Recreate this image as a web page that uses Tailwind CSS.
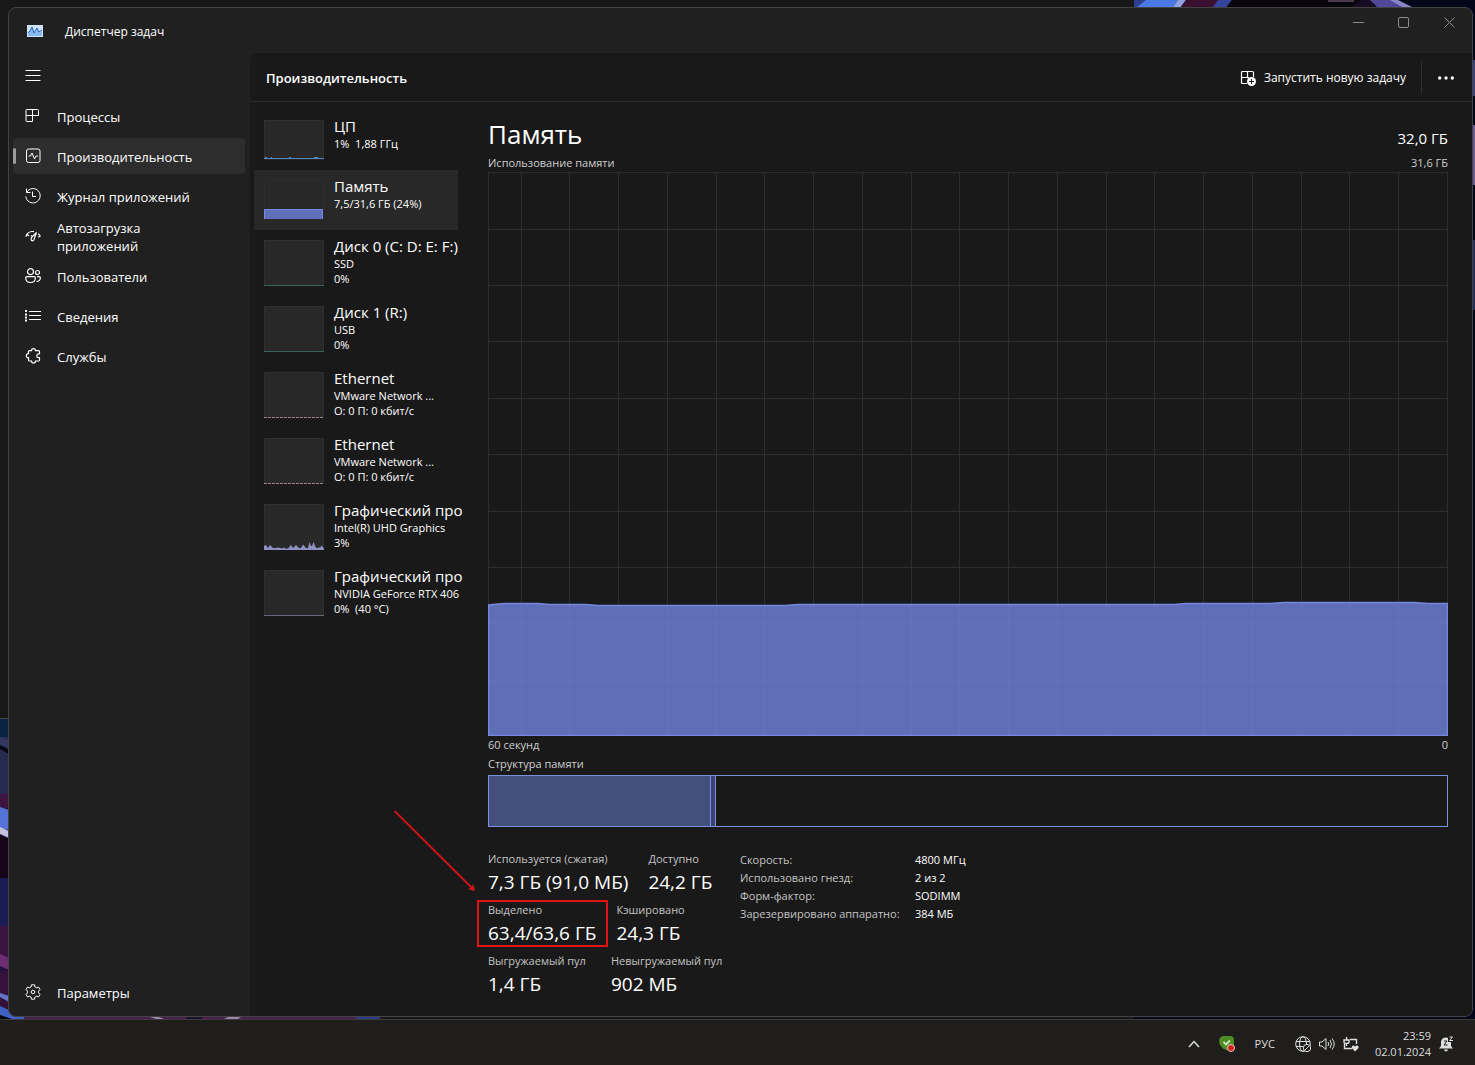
<!DOCTYPE html>
<html lang="ru">
<head>
<meta charset="utf-8">
<meta name="viewport" content="width=device-width, initial-scale=1">
<title>Диспетчер задач</title>
<script src="https://cdn.jsdelivr.net/npm/@tailwindcss/browser@4"></script>
</head>
<body class="bg-[#181818] font-['Open_Sans','Noto_Sans',sans-serif] text-white">
<div class="flex min-h-screen flex-col">

  <!-- Desktop with the application window -->
  <div class="relative flex flex-1 flex-col overflow-hidden pt-[7px] pr-[2px] pb-[2px] pl-2">
    <!-- Wallpaper strips visible around the window -->
    <svg class="absolute top-0 right-0 h-full w-[341px]" viewBox="0 0 341 1019" preserveAspectRatio="none" aria-hidden="true">
      <rect width="341" height="1019" fill="#03071a"/>
      <rect width="240" height="8" fill="#180b24"/>
      <path d="M0 8V0H44L38 8Z" fill="#4a79e6"/><path d="M0 8V0H12L2 8Z" fill="#2c3f8c"/><path d="M44 0H52L46 8H38Z" fill="#8fa2e0"/>
      <path d="M52 0H90L80 8H46Z" fill="#3a1030"/><path d="M78 8 84 0H98L92 8Z" fill="#35439b"/>
      <path d="M98 0H228L215 8H92Z" fill="#08060c"/><path d="M194 0H220V2H194Z" fill="#4b3b4a"/>
      <path d="M236 0H262L276 8H244Z" fill="#51489a"/><path d="M256 0H264L280 8H270Z" fill="#8a85c4"/>
      <rect x="339" y="60" width="2" height="36" fill="#35427e"/><rect x="339" y="125" width="2" height="60" fill="#665a94"/>
      <rect x="339" y="240" width="2" height="70" fill="#22305c"/>
    </svg>
    <svg class="absolute bottom-0 left-0 h-[301px] w-[380px]" viewBox="0 0 380 301" aria-hidden="true">
      <rect width="380" height="301" fill="#25103a"/>
      <rect width="380" height="1" fill="#444"/><rect y="1" width="20" height="88" fill="#252a4e"/>
      <rect y="1" width="20" height="18" fill="#0a2340"/><path d="M0 19 9 22V30L0 27Z" fill="#31375f"/>
      <path d="M0 27 9 32V36L0 31Z" fill="#05060f"/><rect y="76" width="20" height="14" fill="#3d1440"/>
      <path d="M0 89 9 92V112L0 110Z" fill="#5572d6"/><path d="M0 109 9 113V120L0 116Z" fill="#c5c2e0"/>
      <path d="M0 117 9 121V160H0Z" fill="#140616"/><rect y="160" width="20" height="48" fill="#1c1c55"/>
      <rect y="208" width="20" height="32" fill="#3b1242"/><path d="M0 236 9 240V252L0 248Z" fill="#6b2e72"/>
      <rect y="253" width="20" height="48" fill="#35123c"/><path d="M0 275 9 278V284L0 279Z" fill="#6575cc"/>
      <path d="M0 288 28 301H8L0 297Z" fill="#3f61c4"/><path d="M0 297 12 301H0Z" fill="#06060e"/>
      <rect x="24" y="296" width="356" height="5" fill="#4a1f50"/>
      <path d="M144 297H154L164 301H156Z" fill="#9a86aa"/><path d="M224 301 232 297H244L238 301Z" fill="#9a86aa"/>
      <rect x="186" y="297" width="16" height="4" fill="#20122c"/><rect x="356" y="297" width="24" height="4" fill="#2a3c86"/>
    </svg>

    <div class="relative flex flex-1 flex-col overflow-hidden rounded-lg border border-[#434343] bg-[#202020]">
      <header class="flex h-[45px] shrink-0 items-center justify-between">
        <div class="flex items-center gap-[22px] pl-[18px]">
          <svg class="h-3 w-4" viewBox="0 0 16 12" aria-hidden="true"><rect width="16" height="12" fill="#cfe3f6"/><path d="M1 11V7L3 6 5 2 7 7 8 8 10 4 12 7 13 6 15 7V11Z" fill="#8ab9ee"/><path d="M1 8 3 6 5 2 7 8 10 3 12 7 15 5" fill="none" stroke="#2166bd"/></svg>
          <h1 class="pt-[3px] text-xs leading-4">Диспетчер задач</h1>
        </div>
        <div class="flex self-start text-[#8b8b8b]">
          <button class="flex h-7 w-[46px] items-center justify-center" aria-label="Свернуть"><svg class="size-[11px]" viewBox="0 0 11 11" fill="none" stroke="currentColor"><path d="M0 5.5H11"/></svg></button>
          <button class="flex h-7 w-[45px] items-center justify-center" aria-label="Развернуть"><svg class="size-[11px]" viewBox="0 0 11 11" fill="none" stroke="currentColor"><rect x=".5" y=".5" width="10" height="10" rx="1.5"/></svg></button>
          <button class="flex h-7 w-[46px] items-center justify-center" aria-label="Закрыть"><svg class="size-[11px]" viewBox="0 0 11 11" fill="none" stroke="currentColor"><path d="M.5 .5 10.500 10.500M10.500 .5 .5 10.500"/></svg></button>
        </div>
      </header>

      <div class="flex flex-1">
        <nav class="flex w-[241px] shrink-0 flex-col gap-1 pt-[5px] pr-[5px] pb-1.5 pl-1 text-[13px] leading-[18px]">
          <button class="flex h-9 w-10 items-center pl-3" aria-label="Открыть навигацию"><svg class="size-4" viewBox="0 0 16 16" fill="none" stroke="currentColor"><path d="M.5 2.500H15.500M.5 7.500H15.500M.5 12.500H15.500"/></svg></button>
          <button class="flex h-9 items-center gap-4 rounded pl-3 text-left">
            <svg class="size-4 shrink-0" viewBox="0 0 16 16" fill="none" stroke="currentColor"><path d="M2 1.500H12.500Q13.500 1.500 13.500 2.500V7.500H1V2.500Q1 1.500 2 1.500ZM1 7.500V12.500Q1 13.500 2 13.500H7.500V1.500"/></svg>
            <span class="pt-0.5">Процессы</span></button>
          <button class="relative flex h-9 items-center gap-4 rounded bg-[#2d2d2d] pl-3 text-left" aria-current="page">
            <span class="absolute top-2.5 left-0 h-4 w-[3px] rounded-full bg-[#9c9c9c]"></span>
            <svg class="size-4 shrink-0" viewBox="0 0 16 16" fill="none" stroke="currentColor"><rect x="1.500" y="1" width="13.500" height="13.500" rx="2"/><path d="M3.500 8H5.500L7 5 9.500 11 11 8H13"/></svg>
            <span class="pt-0.5">Производительность</span></button>
          <button class="flex h-9 items-center gap-4 rounded pl-3 text-left">
            <svg class="size-4 shrink-0" viewBox="0 0 16 16" fill="none" stroke="currentColor"><path d="M1.500 .5V4.500H5.500M1.700 4.200A7.200 7.200 0 1 1 .8 8.500M7.500 3.500V8.500H11"/></svg>
            <span class="pt-0.5">Журнал приложений</span></button>
          <button class="flex h-9 items-center gap-4 rounded pl-3 text-left">
            <svg class="size-4 shrink-0" viewBox="0 0 16 16" fill="none" stroke="currentColor" stroke-width="1.200"><path d="M.7 8.500A7.500 7.500 0 0 1 9 3.600M13.200 5.800A7.500 7.500 0 0 1 15.400 8.500M.7 8.500 2.500 6.500 4 8M15.400 8.500 13 9M11.500 4.500 6.500 9.500Q5.300 12.500 7.500 12.800 9.200 12.500 9.300 10.500L11.500 4.500ZM8 8.500 6 7.500"/></svg>
            <span class="pt-0.5">Автозагрузка<br>приложений</span></button>
          <button class="flex h-9 items-center gap-4 rounded pl-3 text-left">
            <svg class="size-4 shrink-0" viewBox="0 0 16 16" fill="none" stroke="currentColor" stroke-width="1.200"><circle cx="5.500" cy="3.700" r="3"/><circle cx="12.500" cy="4.500" r="2"/><path d="M2 8.600H9Q10.400 8.600 10.400 10 10.200 14.500 5.500 14.500T.7 10Q.7 8.600 2 8.600ZM12 8.600H14.200Q15.400 8.600 15.400 10 15 13.500 11.500 13.500"/></svg>
            <span class="pt-0.5">Пользователи</span></button>
          <button class="flex h-9 items-center gap-4 rounded pl-3 text-left">
            <svg class="size-4 shrink-0" viewBox="0 0 16 16" fill="none" stroke="currentColor"><path d="M4 3.500H16M4 7.500H16M4 11.500H16"/><path stroke-width="2" d="M0 3H2M0 6.500H2M0 9.500H2M0 12.500H2"/></svg>
            <span class="pt-0.5">Сведения</span></button>
          <button class="flex h-9 items-center gap-4 rounded pl-3 text-left">
            <svg class="size-4 shrink-0" viewBox="0 0 16 16" fill="none" stroke="currentColor" stroke-width="1.200"><path d="M4.500 2.600H6.500Q6.500 .6 8.500 .6T10.500 2.600H13.500Q14.500 2.600 14.500 3.600V5.800H13.500Q11.800 5.800 11.800 7.700T13.500 9.600H14.500V12Q14.500 13 13.500 13H10.500Q10.500 15 8.500 15T6.500 13H4.500Q3.500 13 3.500 12V9.700Q1.300 9.700 1.300 7.700T3.500 5.700V3.600Q3.500 2.600 4.500 2.600Z"/></svg>
            <span class="pt-0.5">Службы</span></button>
          <button class="mt-auto flex h-9 items-center gap-4 rounded pl-3 text-left">
            <svg class="size-4 shrink-0" viewBox="0 0 16 16" fill="none" stroke="currentColor"><path d="M6.500 .8H9.500L10 3 11.400 3.800 13.600 3.100 15 5.600 13.500 7.200V8.800L15 10.400 13.600 12.900 11.400 12.200 10 13 9.500 15.200H6.500L6 13 4.600 12.200 2.400 12.900 1 10.400 2.500 8.800V7.200L1 5.600 2.400 3.100 4.600 3.800 6 3Z" stroke-linejoin="round"/><circle cx="8" cy="8" r="1.800"/></svg>
            <span class="pt-0.5">Параметры</span></button>
        </nav>

        <main class="flex min-w-0 flex-1 flex-col rounded-tl-lg bg-[#191919]">
          <div class="flex h-[49px] shrink-0 items-center justify-between border-b border-[#2b2b2b] pt-0.5 pr-[13px] pl-4">
            <h2 class="text-[13px] leading-[18px] font-semibold">Производительность</h2>
            <div class="flex items-center">
              <button class="flex h-8 items-center gap-2 pr-[15px] text-xs">
                <svg class="size-4" viewBox="0 0 16 16" fill="none" stroke="currentColor"><path d="M7 13.500H2.500Q1.500 13.500 1.500 12.500V2.500Q1.500 1.500 2.500 1.500H12.500Q13.500 1.500 13.500 2.500V7M7.500 1.500V8M1.500 7.500H9" stroke-width="1.200"/><circle cx="11.500" cy="11.500" r="4.500" fill="currentColor" stroke="none"/><path d="M9 11.500H14M11.500 9V14" stroke="#191919"/></svg>
                Запустить новую задачу</button>
              <button class="flex h-8 items-center border-l border-[#2f2f2f] pr-[5px] pl-4" aria-label="Дополнительно"><svg class="size-4" viewBox="0 0 16 16" fill="currentColor"><circle cx="1.700" cy="8" r="1.700"/><circle cx="8" cy="8" r="1.700"/><circle cx="14.300" cy="8" r="1.700"/></svg></button>
            </div>
          </div>

          <div class="flex flex-1">
            <div class="flex w-[214px] shrink-0 flex-col pt-2 pl-1 text-[11px] leading-[15px]">
              <button class="flex h-[60px] w-[204px] gap-2.5 pt-2.5 pl-2.5 text-left whitespace-nowrap">
                <svg class="h-10 w-[60px] shrink-0 bg-[#282828]" viewBox="0 0 60 40"><path d="M.5 39V.5H59.500V39" fill="none" stroke="#303030"/><path d="M0 38.500H60M1 37.500H3M7 37.500H8M25 37.500H27M50 37.500H54" stroke="#5288bd"/></svg>
                <span><span class="-mt-0.5 mb-0.5 block text-[15px] leading-4">ЦП</span>1%&nbsp; 1,88 ГГц</span></button>
              <button class="flex h-[60px] w-[204px] gap-2.5 bg-[#282828] pt-2.5 pl-2.5 text-left whitespace-nowrap" aria-pressed="true">
                <svg class="h-10 w-[60px] shrink-0" viewBox="0 0 60 40"><path d="M.5 30V.5H59.500V30" fill="none" stroke="#2d2d2d"/><path d="M0 29H59V39H0Z" fill="#606fb9"/><path d="M.5 39V29.500H58.500V39" fill="none" stroke="#7587de"/></svg>
                <span><span class="-mt-0.5 mb-0.5 block text-[15px] leading-4">Память</span>7,5/31,6 ГБ (24%)</span></button>
              <button class="flex h-[66px] w-[204px] gap-2.5 pt-2.5 pl-2.5 text-left whitespace-nowrap">
                <svg class="h-[46px] w-[60px] shrink-0 bg-[#282828]" viewBox="0 0 60 46"><path d="M.5 45V.5H59.500V45" fill="none" stroke="#303030"/><path d="M0 45.500H60" stroke="#3c5f60"/></svg>
                <span><span class="-mt-0.5 mb-0.5 block text-[15px] leading-4">Диск 0 (C: D: E: F:)</span>SSD<br>0%</span></button>
              <button class="flex h-[66px] w-[204px] gap-2.5 pt-2.5 pl-2.5 text-left whitespace-nowrap">
                <svg class="h-[46px] w-[60px] shrink-0 bg-[#282828]" viewBox="0 0 60 46"><path d="M.5 45V.5H59.500V45" fill="none" stroke="#303030"/><path d="M0 45.500H60" stroke="#3c5f60"/></svg>
                <span><span class="-mt-0.5 mb-0.5 block text-[15px] leading-4">Диск 1 (R:)</span>USB<br>0%</span></button>
              <button class="flex h-[66px] w-[204px] gap-2.5 pt-2.5 pl-2.5 text-left whitespace-nowrap">
                <svg class="h-[46px] w-[60px] shrink-0 bg-[#282828]" viewBox="0 0 60 46"><path d="M.5 45V.5H59.500V45" fill="none" stroke="#303030"/><path d="M0 45.500H60" stroke="#a07f8c" stroke-dasharray="3 1"/></svg>
                <span><span class="-mt-0.5 mb-0.5 block text-[15px] leading-4">Ethernet</span>VMware Network ...<br>О: 0 П: 0 кбит/с</span></button>
              <button class="flex h-[66px] w-[204px] gap-2.5 pt-2.5 pl-2.5 text-left whitespace-nowrap">
                <svg class="h-[46px] w-[60px] shrink-0 bg-[#282828]" viewBox="0 0 60 46"><path d="M.5 45V.5H59.500V45" fill="none" stroke="#303030"/><path d="M0 45.500H60" stroke="#a07f8c" stroke-dasharray="3 1"/></svg>
                <span><span class="-mt-0.5 mb-0.5 block text-[15px] leading-4">Ethernet</span>VMware Network ...<br>О: 0 П: 0 кбит/с</span></button>
              <button class="flex h-[66px] w-[204px] gap-2.5 pt-2.5 pl-2.5 text-left whitespace-nowrap">
                <svg class="h-[46px] w-[60px] shrink-0 bg-[#282828]" viewBox="0 0 60 46"><path d="M.5 45V.5H59.500V45" fill="none" stroke="#303030"/><path d="M0 45V42L2 41 4 44 6 41 9 44H12L14 43.500 19 44.500 20 43 21 44.500H24L27 41 29 44 32 41 35 44H37L39 40.500 42 44H44L45.500 38 47 42H48L49.500 38 52 44 56 43.500 58 41.500 60 45V46H0Z" fill="#8f8fc4"/></svg>
                <span><span class="-mt-0.5 mb-0.5 block text-[15px] leading-4">Графический про</span>Intel(R) UHD Graphics<br>3%</span></button>
              <button class="flex h-[66px] w-[204px] gap-2.5 pt-2.5 pl-2.5 text-left whitespace-nowrap">
                <svg class="h-[46px] w-[60px] shrink-0 bg-[#282828]" viewBox="0 0 60 46"><path d="M.5 45V.5H59.500V45" fill="none" stroke="#303030"/><path d="M0 45.500H60" stroke="#666679"/></svg>
                <span><span class="-mt-0.5 mb-0.5 block text-[15px] leading-4">Графический про</span>NVIDIA GeForce RTX 406<br>0%&nbsp; (40 °C)</span></button>
            </div>

            <section class="flex min-w-0 flex-1 flex-col pt-[14px] pr-6 pb-[15px] pl-6">
              <div class="flex items-end justify-between">
                <h3 class="text-[26px] leading-9">Память</h3>
                <span class="text-[15px] leading-7">32,0 ГБ</span>
              </div>
              <div class="flex h-5 items-center justify-between pt-0.5 text-[11px] leading-4 text-[#cfcfcf]"><span>Использование памяти</span><span>31,6 ГБ</span></div>
              <svg class="min-h-[300px] w-full grow basis-[300px]" viewBox="0 0 960 564" preserveAspectRatio="none" role="img" aria-label="График использования памяти">
                <g fill="none" stroke="#2d2d2d" shape-rendering="crispEdges">
                  <rect x=".5" y=".5" width="959" height="563"/>
                  <path d="M0 57.500H960M0 113.500H960M0 169.500H960M0 226.500H960M0 282.500H960M0 339.500H960M0 395.500H960"/>
                  <path d="M33.500 0V564M81.500 0V564M130.500 0V564M179.500 0V564M228.500 0V564M276.500 0V564M325.500 0V564M374.500 0V564M423.500 0V564M471.500 0V564M520.500 0V564M569.500 0V564M618.500 0V564M666.500 0V564M715.500 0V564M764.500 0V564M813.500 0V564M861.500 0V564M910.500 0V564"/>
                </g>
                <path d="M0 433 16 431.500H50L62 432.500H98L110 433.500H297L310 432.500H686L698 431.500H782L796 430.500H926L940 431.500H960V564H0Z" fill="#5f6eb7"/>
                <path d="M0 451.500H960M0 508.500H960M33.500 433V564M81.500 433V564M130.500 433V564M179.500 433V564M228.500 433V564M276.500 433V564M325.500 433V564M374.500 433V564M423.500 433V564M471.500 433V564M520.500 433V564M569.500 433V564M618.500 433V564M666.500 433V564M715.500 433V564M764.500 433V564M813.500 433V564M861.500 433V564M910.500 433V564" stroke="#6574bc" stroke-opacity=".7" shape-rendering="crispEdges"/>
                <path d="M.5 563.500V433L16 431.500H50L62 432.500H98L110 433.500H297L310 432.500H686L698 431.500H782L796 430.500H926L940 431.500H959.500V563.500Z" fill="none" stroke="#7488dd" stroke-width="1.500"/>
              </svg>
              <div class="flex h-[19px] shrink-0 items-center justify-between pb-0.5 text-[11px] leading-4 text-[#cfcfcf]"><span>60 секунд</span><span>0</span></div>
              <div class="h-5 shrink-0 text-[11px] leading-[17px] text-[#cfcfcf]">Структура памяти</div>
              <div class="flex h-[52px] shrink-0 border border-[#7d90e0]">
                <div class="border-r border-[#7d90e0] bg-[#454f7d]" style="width:23.2%"></div>
                <div class="w-[5px] border-r border-[#7d90e0] bg-[#3a4371]"></div>
              </div>

              <div class="flex gap-3 pt-6">
                <dl class="flex w-60 shrink-0 flex-col gap-[3px] text-[19px] leading-[30px] whitespace-nowrap">
                  <div class="flex h-12 gap-5">
                    <div><dt class="text-[11px] leading-4 text-[#c4c4c4]">Используется (сжатая)</dt><dd>7,3 ГБ (91,0 МБ)</dd></div>
                    <div><dt class="text-[11px] leading-4 text-[#c4c4c4]">Доступно</dt><dd>24,2 ГБ</dd></div>
                  </div>
                  <div class="flex h-12 gap-5">
                    <div class="relative">
                      <svg class="absolute -top-[92px] -left-[94px] size-[82px]" viewBox="0 0 82 82" aria-hidden="true"><path d="M.5 1 79 79" stroke="#d41414" stroke-width="1.800"/><path d="M81 81 74.500 79.500 79.500 74.500Z" fill="#d41414"/></svg>
                      <span class="absolute -top-0.5 -left-[11px] h-[47px] w-[131px] border-2 border-[#e01414]"></span>
                      <dt class="text-[11px] leading-4 text-[#c4c4c4]">Выделено</dt><dd>63,4/63,6 ГБ</dd></div>
                    <div><dt class="text-[11px] leading-4 text-[#c4c4c4]">Кэшировано</dt><dd>24,3 ГБ</dd></div>
                  </div>
                  <div class="flex h-12 gap-5">
                    <div class="min-w-[103px]"><dt class="text-[11px] leading-4 text-[#c4c4c4]">Выгружаемый пул</dt><dd>1,4 ГБ</dd></div>
                    <div><dt class="text-[11px] leading-4 text-[#c4c4c4]">Невыгружаемый пул</dt><dd>902 МБ</dd></div>
                  </div>
                </dl>
                <table class="self-start text-[11px] leading-[18px] whitespace-nowrap">
                  <tbody>
                    <tr><th class="w-[175px] text-left font-normal text-[#c4c4c4]">Скорость:</th><td>4800 МГц</td></tr>
                    <tr><th class="text-left font-normal text-[#c4c4c4]">Использовано гнезд:</th><td>2 из 2</td></tr>
                    <tr><th class="text-left font-normal text-[#c4c4c4]">Форм-фактор:</th><td>SODIMM</td></tr>
                    <tr><th class="text-left font-normal text-[#c4c4c4]">Зарезервировано аппаратно:</th><td>384 МБ</td></tr>
                  </tbody>
                </table>
              </div>
            </section>
          </div>
        </main>
      </div>
    </div>
  </div>

  <!-- Taskbar -->
  <footer class="flex h-[46px] shrink-0 items-center justify-end border-t border-[#3d3c3b] bg-[#1f1e1c] pt-0.5 pr-[21px] text-[#dedede]">
    <button class="mr-4" aria-label="Скрытые значки"><svg class="size-4" viewBox="0 0 16 16" fill="none" stroke="currentColor" stroke-width="1.500"><path d="M3 11 8 5.500 13 11"/></svg></button>
    <button class="mr-5" aria-label="Защита"><svg class="size-[17px]" viewBox="0 0 17 17"><path d="M5 1H12Q16 1 16 5V9Q16 15 9.500 15.500 4 14 1.500 9 0 2 5 1Z" fill="#4e8d24"/><path d="M5.500 7 8 9.500 12 5.500" fill="none" stroke="#cfe5c0" stroke-width="1.800"/><circle cx="13" cy="13" r="3.500" fill="#d11e1e" stroke="#e9c6c0"/></svg></button>
    <button class="mr-5 text-[11px] leading-4" aria-label="Язык ввода">РУС</button>
    <button class="mr-4 flex gap-2" aria-label="Сеть, звук, батарея">
      <svg class="size-4" viewBox="0 0 16 16" fill="none" stroke="currentColor"><circle cx="8" cy="8" r="7.300"/><ellipse cx="8" cy="8" rx="3.500" ry="7.300"/><path d="M1 5.500H15M1 10.500H8"/><circle cx="12" cy="12" r="3.700" fill="#1f1e1c"/><path d="M9.500 14.500 14.500 9.500"/></svg>
      <svg class="size-4" viewBox="0 0 16 16" fill="none" stroke="currentColor"><path d="M.5 6V10H3L7 13.500V2.500L3 6ZM9 6Q10.500 8 9 10M11 4Q14 8 11 12M13 2.500Q17.500 8 13 13.500"/></svg>
      <svg class="size-4" viewBox="0 0 16 16" fill="none" stroke="currentColor" stroke-width="1.400"><path d="M7 3.500H13.500V8M1.500 7.500V12.500H9M3.500 1V3.500M1 4H6V6Q6 7.500 3.500 7.500T1 6ZM3.500 8V10"/><path d="M12 15.500 8.800 12Q8.500 9 10.800 9.500L12 10.500 13.500 9.500Q16 9.300 15.500 12Z" fill="currentColor" stroke="none"/></svg>
    </button>
    <time class="mr-[7px] text-right text-[11px] leading-4" datetime="2024-01-02T23:59">23:59<br>02.01.2024</time>
    <button aria-label="Уведомления"><svg class="size-4" viewBox="0 0 16 16"><path d="M1 12.500 3 10V6Q3.500 1.500 8 1.500L10 2V6H13V10L15 12.500ZM6 13.500H10Q9.500 15.500 8 15.500T6 13.500Z" fill="currentColor"/><path d="M6 5H9L6 9H9.500" fill="none" stroke="#1f1e1c"/><path d="M11.500 1H14.500L11.500 4.500H15" fill="none" stroke="currentColor"/></svg></button>
  </footer>
</div>
</body>
</html>
